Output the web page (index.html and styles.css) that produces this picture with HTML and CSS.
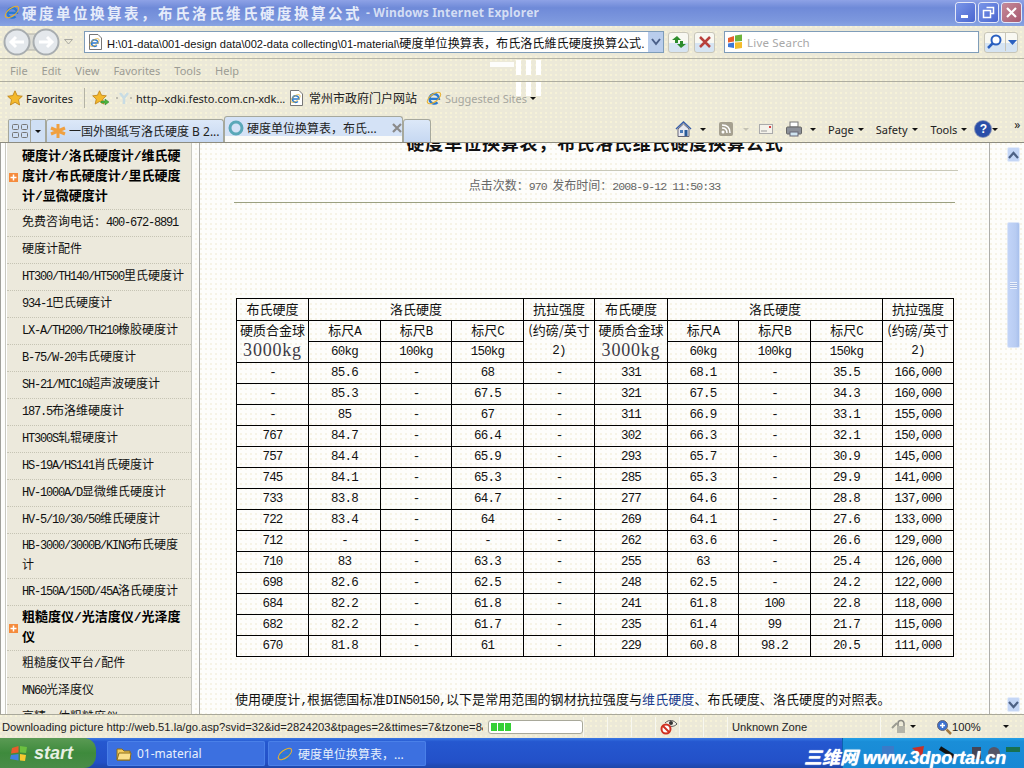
FILE: index.html
```html
<!DOCTYPE html>
<html lang="zh">
<head>
<meta charset="utf-8">
<title>硬度单位换算表</title>
<link rel="stylesheet" href="styles.css">
</head>
<body>
<svg class="defs" width="0" height="0">
  <symbol id="ie" viewBox="0 0 16 16">
    <path d="M4.500 8.800H13A4.800 4.800 0 1 0 11.500 12.300" fill="none" stroke="#2a7ad0" stroke-width="2.300"/>
    <ellipse cx="8" cy="8" rx="8" ry="3.800" transform="rotate(-38 8 8)" fill="none" stroke="#e8b030" stroke-width="1"/>
  </symbol>
  <symbol id="doc" viewBox="0 0 16 16">
    <path d="M2.500 .5H11L14.500 4V15.500H2.500Z" fill="#fff" stroke="#777"/>
    <use href="#ie" x="2" y="3" width="11" height="11"/>
  </symbol>
  <symbol id="star" viewBox="0 0 16 16">
    <path d="M8 .8 10.200 5.600 15.300 6.200 11.500 9.700 12.600 15 8 12.300 3.400 15 4.500 9.700 .7 6.200 5.800 5.600Z" fill="#f4b92c" stroke="#bb7d10" stroke-width=".8"/>
  </symbol>
  <symbol id="plus" viewBox="0 0 9 9">
    <rect width="9" height="9" fill="#f58b3c"/><path d="M4.500 1.500V7.500M1.500 4.500H7.500" stroke="#fff" stroke-width="1.500"/>
  </symbol>
</svg>

<div class="screen">
  <header class="titlebar">
    <svg class="i16"><use href="#ie"/></svg>
    <span class="title-cn">硬度单位换算表，布氏洛氏维氏硬度换算公式</span>
    <span class="title-en">- Windows Internet Explorer</span>
    <span class="winbtns">
      <span class="winbtn"><svg width="19" height="19"><rect x="5" y="12" width="7" height="3" fill="#fff"/></svg></span>
      <span class="winbtn"><svg width="19" height="19"><path d="M7.500 4.500H14.500V10.500H12M4.500 7.500H11.500V14.500H4.500Z" fill="none" stroke="#fff" stroke-width="1.500"/></svg></span>
      <span class="winbtn close"><svg width="19" height="19"><path d="M5 5 14 14M14 5 5 14" stroke="#fff" stroke-width="2.200"/></svg></span>
    </span>
  </header>

  <div class="addressrow">
    <span class="navpill">
      <svg width="57" height="28" viewBox="0 0 57 28">
        <rect x="8" y="6" width="42" height="16" fill="#dcdcd4" stroke="#b4b4aa"/>
        <circle cx="14" cy="14" r="12.500" fill="#e4e8ec" stroke="#a8adb0" stroke-width="2"/>
        <circle cx="43" cy="14" r="12.500" fill="#e4e8ec" stroke="#a8adb0" stroke-width="2"/>
        <path d="M21 14H9M13 9 8 14 13 19M36 14H48M44 9 49 14 44 19" fill="none" stroke="#fff" stroke-width="3"/>
      </svg>
    </span>
    <svg class="droptri" width="9" height="6"><path d="M.5.500H8.500L4.500 5Z" fill="none" stroke="#a8a8a0"/></svg>
    <div class="addrbox">
      <svg class="i16"><use href="#doc"/></svg>
      <span class="addrtext"><i class="al">H:\01-data\001-design data\002-data collecting\01-material\</i>硬度单位换算表，布氏洛氏維氏硬度换算公式.</span>
      <span class="addrdrop"><svg width="10" height="8"><path d="M1 1 5 6 9 1" fill="none" stroke="#4a5f88" stroke-width="2"/></svg></span>
    </div>
    <span class="toolbtn"><svg width="18" height="16"><path d="M7 2 2 6H5V9H8V6H11ZM11 14 16 10H13V7H10V10H7Z" fill="#2c8c2c"/></svg></span>
    <span class="toolbtn"><svg width="14" height="14"><path d="M2 2 12 12M12 2 2 12" stroke="#b8403c" stroke-width="2.500"/></svg></span>
    <div class="searchbox">
      <svg width="16" height="16" viewBox="0 0 16 16"><path d="M1 4 7 2V7.500L1 8.500Z" fill="#e8602c"/><path d="M8 1.500 15 .5V7L8 7.500Z" fill="#6eb43c"/><path d="M1 9.500 7 8.500V14L1 13Z" fill="#3c78d8"/><path d="M8 8.500 15 8V14L8 15Z" fill="#f4bc2c"/></svg>
      <span class="searchtext">Live Search</span>
    </div>
    <span class="searchbtn">
      <svg width="20" height="18"><circle cx="11" cy="7" r="4.500" fill="#fff" stroke="#2a60c0" stroke-width="2"/><path d="M8 10 3 15" stroke="#2a60c0" stroke-width="2.500"/></svg>
      <svg class="searchdrop" width="13" height="18"><path d="M2 7H11L6.500 12Z" fill="#2a60c0"/></svg>
    </span>
  </div>

  <nav class="menubar">
    <span>File</span><span>Edit</span><span>View</span><span>Favorites</span><span>Tools</span><span>Help</span>
  </nav>

  <div class="favbar">
    <svg class="i16"><use href="#star"/></svg>
    <span class="favlabel">Favorites</span>
    <span class="favsep"></span>
    <svg class="favadd" width="18" height="18" viewBox="0 0 18 18"><use href="#star" width="15" height="15" y="1"/><path d="M9 12H13V10L17 13 13 16V14H9Z" fill="#4cb43c" stroke="#2c8030" stroke-width=".5"/></svg>
    <svg class="favy" width="16" height="12" viewBox="0 0 16 12"><path d="M4 1 8 6 12 1M8 6V12" fill="none" stroke="#c8dce4" stroke-width="2.500"/><path d="M0 6H2M14 6H16" stroke="#888"/></svg>
    <span class="favlink w1">http--xdki.festo.com.cn-xdk...</span>
    <svg class="i16"><use href="#doc"/></svg>
    <span class="favlink w2">常州市政府门户网站</span>
    <svg class="i16"><use href="#ie"/></svg>
    <span class="favlink w3">Suggested Sites</span>
    <span class="caret"></span>
  </div>

  <div class="tabbar">
    <span class="quick">
      <svg width="16" height="14"><g fill="none" stroke="#777"><rect x=".5" y=".5" width="6" height="5" rx="1"/><rect x="9.500" y=".5" width="6" height="5" rx="1"/><rect x=".5" y="8.500" width="6" height="5" rx="1"/><rect x="9.500" y="8.500" width="6" height="5" rx="1"/></g></svg>
    </span>
    <span class="quick small"><span class="caret"></span></span>
    <span class="tab">
      <svg width="16" height="16" viewBox="0 0 16 16"><path d="M8 1V15M1 5 15 11M1 11 15 5" stroke="#f0a040" stroke-width="3"/></svg>
      <span class="tabtext">一国外图纸写洛氏硬度 B 2...</span>
    </span>
    <span class="tab active">
      <svg width="16" height="16"><circle cx="8" cy="8" r="6" fill="none" stroke="#5aa8b8" stroke-width="3"/></svg>
      <span class="tabtext">硬度单位换算表，布氏...</span>
      <svg class="tabx" width="10" height="10"><path d="M1 1 9 9M9 1 1 9" stroke="#8a8a8a" stroke-width="2.200"/></svg>
    </span>
    <span class="tab blank"></span>
    <div class="cmdbar">
      <svg class="cmd-home" width="17" height="16" viewBox="0 0 17 16"><path d="M1 8 8.500 1 16 8" fill="none" stroke="#3a5ea8" stroke-width="1.500"/><path d="M3 8V15.500H14V8L8.500 3Z" fill="#e8e8f0" stroke="#667"/><rect x="5" y="9" width="3" height="3" fill="#4a7ab8"/><rect x="9.500" y="9" width="3" height="6" fill="#2a5a98"/></svg>
      <span class="caret c1"></span>
      <svg class="cmd-rss" width="14" height="14"><rect width="14" height="14" rx="2" fill="#a5a090"/><circle cx="4" cy="10" r="1.500" fill="#fff"/><path d="M3 6C6 6 8 8 8 11M3 3C8 3 11 6 11 11" fill="none" stroke="#fff" stroke-width="1.500"/></svg>
      <span class="caret c2 faint"></span>
      <svg class="cmd-mail" width="14" height="10"><rect x=".5" y=".5" width="13" height="9" fill="#f4f2ea" stroke="#aaa"/><rect x="10" y="2" width="2" height="2" fill="#d84040"/><path d="M2 7H8" stroke="#999"/></svg>
      <svg class="cmd-print" width="16" height="16" viewBox="0 0 16 16"><rect x="4" y="1" width="8" height="5" fill="#fff" stroke="#777"/><rect x=".5" y="6" width="15" height="7" rx="1" fill="#8c9098" stroke="#666"/><rect x="4" y="11" width="8" height="4" fill="#cfe4f0" stroke="#667"/></svg>
      <span class="caret c3"></span>
      <span class="cmdtext t1">Page<span class="caret"></span></span>
      <span class="cmdtext t2">Safety<span class="caret"></span></span>
      <span class="cmdtext t3">Tools<span class="caret"></span></span>
      <span class="helpicon">?</span><span class="caret c4"></span>
      <span class="more">»</span>
    </div>
  </div>

  <main class="viewport">
    <aside class="side">
      <ul class="sidelist">
        <li class="b"><svg class="plus"><use href="#plus"/></svg><span>硬度计/洛氏硬度计/维氏硬度计/布氏硬度计/里氏硬度计/显微硬度计</span></li>
        <li><span>免费咨询电话：<i class="l">400-672-8891</i></span></li>
        <li><span>硬度计配件</span></li>
        <li><span><i class="l">HT300/TH140/HT500</i>里氏硬度计</span></li>
        <li><span><i class="l">934-1</i>巴氏硬度计</span></li>
        <li><span><i class="l">LX-A/TH200/TH210</i>橡胶硬度计</span></li>
        <li><span><i class="l">B-75/W-20</i>韦氏硬度计</span></li>
        <li><span><i class="l">SH-21/MIC10</i>超声波硬度计</span></li>
        <li><span><i class="l">187.5</i>布洛维硬度计</span></li>
        <li><span><i class="l">HT300S</i>轧辊硬度计</span></li>
        <li><span><i class="l">HS-19A/HS141</i>肖氏硬度计</span></li>
        <li><span><i class="l">HV-1000A/D</i>显微维氏硬度计</span></li>
        <li><span><i class="l">HV-5/10/30/50</i>维氏硬度计</span></li>
        <li><span><i class="l">HB-3000/3000B/KING</i>布氏硬度计</span></li>
        <li><span><i class="l">HR-150A/150D/45A</i>洛氏硬度计</span></li>
        <li class="b"><svg class="plus"><use href="#plus"/></svg><span>粗糙度仪/光洁度仪/光泽度仪</span></li>
        <li><span>粗糙度仪平台/配件</span></li>
        <li><span><i class="l">MN60</i>光泽度仪</span></li>
        <li><span>高精一体粗糙度仪</span></li>
      </ul>
    </aside>

    <article class="article">
      <h1 class="headline">硬度单位换算表，布氏洛氏维氏硬度换算公式</h1>
      <div class="meta">点击次数：<i class="l">970</i>&nbsp;&nbsp;发布时间：<i class="l">2008-9-12 11:50:33</i></div>
      <table class="grid">
        <colgroup><col class="c1"><col class="c2"><col class="c3"><col class="c4"><col class="c5"><col class="c6"><col class="c7"><col class="c8"><col class="c9"><col class="c10"></colgroup>
        <tr class="cn top"><td>布氏硬度</td><td colspan="3">洛氏硬度</td><td>抗拉强度</td><td>布氏硬度</td><td colspan="3">洛氏硬度</td><td>抗拉强度</td></tr>
        <tr class="cn"><td rowspan="2" class="hard">硬质合金球<span class="big">3000kg</span></td><td>标尺<i class="l">A</i></td><td>标尺<i class="l">B</i></td><td>标尺<i class="l">C</i></td><td rowspan="2" class="ten">(约磅/英寸<i class="l two">2)</i></td><td rowspan="2" class="hard">硬质合金球<span class="big">3000kg</span></td><td>标尺<i class="l">A</i></td><td>标尺<i class="l">B</i></td><td>标尺<i class="l">C</i></td><td rowspan="2" class="ten">(约磅/英寸<i class="l two">2)</i></td></tr>
        <tr><td>60kg</td><td>100kg</td><td>150kg</td><td>60kg</td><td>100kg</td><td>150kg</td></tr>
        <tr><td>-</td><td>85.6</td><td>-</td><td>68</td><td>-</td><td>331</td><td>68.1</td><td>-</td><td>35.5</td><td>166,000</td></tr>
        <tr><td>-</td><td>85.3</td><td>-</td><td>67.5</td><td>-</td><td>321</td><td>67.5</td><td>-</td><td>34.3</td><td>160,000</td></tr>
        <tr><td>-</td><td>85</td><td>-</td><td>67</td><td>-</td><td>311</td><td>66.9</td><td>-</td><td>33.1</td><td>155,000</td></tr>
        <tr><td>767</td><td>84.7</td><td>-</td><td>66.4</td><td>-</td><td>302</td><td>66.3</td><td>-</td><td>32.1</td><td>150,000</td></tr>
        <tr><td>757</td><td>84.4</td><td>-</td><td>65.9</td><td>-</td><td>293</td><td>65.7</td><td>-</td><td>30.9</td><td>145,000</td></tr>
        <tr><td>745</td><td>84.1</td><td>-</td><td>65.3</td><td>-</td><td>285</td><td>65.3</td><td>-</td><td>29.9</td><td>141,000</td></tr>
        <tr><td>733</td><td>83.8</td><td>-</td><td>64.7</td><td>-</td><td>277</td><td>64.6</td><td>-</td><td>28.8</td><td>137,000</td></tr>
        <tr><td>722</td><td>83.4</td><td>-</td><td>64</td><td>-</td><td>269</td><td>64.1</td><td>-</td><td>27.6</td><td>133,000</td></tr>
        <tr><td>712</td><td>-</td><td>-</td><td>-</td><td>-</td><td>262</td><td>63.6</td><td>-</td><td>26.6</td><td>129,000</td></tr>
        <tr><td>710</td><td>83</td><td>-</td><td>63.3</td><td>-</td><td>255</td><td>63</td><td>-</td><td>25.4</td><td>126,000</td></tr>
        <tr><td>698</td><td>82.6</td><td>-</td><td>62.5</td><td>-</td><td>248</td><td>62.5</td><td>-</td><td>24.2</td><td>122,000</td></tr>
        <tr><td>684</td><td>82.2</td><td>-</td><td>61.8</td><td>-</td><td>241</td><td>61.8</td><td>100</td><td>22.8</td><td>118,000</td></tr>
        <tr><td>682</td><td>82.2</td><td>-</td><td>61.7</td><td>-</td><td>235</td><td>61.4</td><td>99</td><td>21.7</td><td>115,000</td></tr>
        <tr><td>670</td><td>81.8</td><td>-</td><td>61</td><td>-</td><td>229</td><td>60.8</td><td>98.2</td><td>20.5</td><td>111,000</td></tr>
      </table>
      <p class="note">使用硬度计<i class="l">,</i>根据德国标准<i class="l">DIN50150,</i>以下是常用范围的钢材抗拉强度与<a class="link">维氏硬度</a>、布氏硬度、洛氏硬度的对照表。</p>
    </article>

    <div class="scrollwrap">
      <div class="scrollbar">
        <span class="sbtn"><svg width="11" height="8"><path d="M1 7 5.500 2 10 7" fill="none" stroke="#4d6185" stroke-width="2.200"/></svg></span>
        <span class="thumb"><span class="grip"></span></span>
        <span class="sbtn down"><svg width="11" height="8"><path d="M1 1 5.500 6 10 1" fill="none" stroke="#4d6185" stroke-width="2.200"/></svg></span>
      </div>
    </div>
  </main>

  <footer class="status">
    <span class="stext">Downloading picture http://web.51.la/go.asp?svid=32&amp;id=2824203&amp;tpages=2&amp;ttimes=7&amp;tzone=8&amp;</span>
    <span class="progress"><b></b><b></b><b></b></span>
    <span class="scell w24"></span><span class="scell w24"></span><span class="scell w24"></span>
    <span class="scell eye"><svg width="18" height="16"><path d="M5 4C9 0 14 1 17 5 14 8 10 8 8 6" fill="#f0eee4" stroke="#555"/><circle cx="11" cy="4" r="2" fill="#333"/><circle cx="6" cy="10" r="4.500" fill="#fff" stroke="#d03020" stroke-width="2"/><path d="M3 7 9 13" stroke="#d03020" stroke-width="2"/></svg></span>
    <span class="scell w24"></span><span class="scell w24"></span>
    <span class="scell zone">Unknown Zone</span>
    <span class="scell lock"><svg width="16" height="15"><path d="M2 9 7 4" stroke="#9a9a90" stroke-width="2"/><path d="M8 7V4.500A3 3 0 0 1 14 4.500V7" fill="none" stroke="#8a8a82" stroke-width="1.500"/><rect x="7" y="7" width="8" height="7" fill="#b4b4a8"/></svg><span class="caret"></span></span>
    <span class="zoombox"><svg width="16" height="16"><circle cx="6.500" cy="6.500" r="5" fill="#3a70d0" stroke="#667"/><path d="M4 6.500H9M6.500 4V9" stroke="#fff" stroke-width="1.500"/><path d="M10.500 10.500 15 15" stroke="#a07840" stroke-width="2.500"/></svg><span>100%</span><span class="caret"></span></span>
  </footer>

  <div class="taskbar">
    <span class="start">
      <svg width="19" height="19" viewBox="0 0 19 19"><path d="M2 4 8.500 2V8.500L1 9.500Z" fill="#e85c2c"/><path d="M10 2 17 3 16 9 10 8.500Z" fill="#6cc040"/><path d="M1 11 8.500 10V16.500L0 15Z" fill="#4080e0"/><path d="M10 10 16 11 15 17 10 16.500Z" fill="#f8c830"/></svg>
      <span>start</span>
    </span>
    <span class="task first">
      <svg width="16" height="14"><path d="M1 13V2H6L8 4H14V13Z" fill="#f4cc5c" stroke="#8c6c18"/><path d="M1 13 3 6H15L14 13Z" fill="#fbe08c" stroke="#8c6c18"/></svg>
      <span>01-material</span>
    </span>
    <span class="task">
      <svg class="i16"><use href="#ie"/></svg>
      <span>硬度单位换算表，...</span>
    </span>
    <div class="tray">
      <svg width="150" height="16"><rect x="10" y="1" width="12" height="13" fill="#3a7ac8"/><path d="M40 3 52 1 50 12Z" fill="#c83028"/><path d="M68 3 84 13" stroke="#111" stroke-width="4"/><rect x="100" y="2" width="9" height="12" fill="#445"/><circle cx="122" cy="8" r="6" fill="#556"/><rect x="134" y="2" width="14" height="5" fill="#187050"/></svg>
    </div>
  </div>

  <span class="glitch g1"></span><span class="glitch g2"></span><span class="glitch g3"></span>
  <span class="watermark">三维网 www.3dportal.cn</span>
</div>
</body>
</html>
```

FILE: styles.css
```css
html, body { margin: 0; padding: 0; }
body { width: 1024px; height: 768px; overflow: hidden; background: #ece9d8; font-family: "Liberation Sans", "Noto Sans CJK SC", sans-serif; }
.defs { position: absolute; }
svg { display: block; flex: none; }
i { font-style: normal; }
.i16 { width: 16px; height: 16px; }
.screen { position: relative; width: 1024px; height: 768px; display: flex; flex-direction: column; overflow: hidden; }
.addressrow, .menubar, .favbar, .tabbar, .status {
  background-color: #ece9d8;
  background-image: radial-gradient(circle at 1px 1px, #f6f2d8 .8px, transparent 1px);
  background-size: 5px 5px;
}

/* title bar */
.titlebar { height: 26px; flex: none; box-sizing: border-box; display: flex; align-items: center; padding: 0 3px 2px 4px; background: linear-gradient(#8ea2e6, #6f8ad8 30%, #7d98de 80%, #88a4e2); }
.title-cn { margin-left: 2px; width: 344px; font: 700 14.500px "Noto Sans CJK SC", sans-serif; letter-spacing: 2.500px; color: #e6ecfa; white-space: nowrap; }
.title-en { font: 700 12px "Noto Sans", sans-serif; letter-spacing: .2px; color: #d4def4; white-space: nowrap; }
.winbtns { margin-left: auto; display: flex; gap: 4px; }
.winbtn { width: 19px; height: 19px; border-radius: 3px; background: linear-gradient(135deg, #7a96e8, #4a66d0); box-shadow: 0 0 0 1px #e4e8f8; }
.winbtn.close { background: linear-gradient(135deg, #c58a9a, #a85a70); }

/* address */
.addressrow { height: 33px; flex: none; box-sizing: border-box; display: flex; align-items: center; padding: 0 0 0 3px; border-bottom: 1px solid #b5b4a6; }
.navpill { width: 57px; height: 28px; }
.droptri { margin-left: 4px; }
.addrbox { margin-left: 11px; width: 580px; height: 22px; box-sizing: border-box; border: 1px solid #7f9db9; background: #fff; display: flex; align-items: center; padding-left: 2px; position: relative; }
.addrtext { margin-left: 4px; width: 541px; overflow: hidden; white-space: nowrap; font: 12.100px "Liberation Sans", "Noto Sans CJK SC", sans-serif; color: #111; }
.al { font-size: 11.100px; }
.addrdrop { margin-left: auto; width: 15px; height: 20px; background: #b9cdec; display: flex; align-items: center; justify-content: center; }
.toolbtn { margin-left: 4px; width: 21px; height: 21px; box-sizing: border-box; border: 1px solid #c8c6b8; border-radius: 3px; background: linear-gradient(#f8f8f2 50%, #d6e4f2 50%); display: flex; align-items: center; justify-content: center; }
.toolbtn + .toolbtn { margin-left: 5px; }
.searchbox { margin-left: 9px; width: 255px; height: 22px; box-sizing: border-box; border: 1px solid #7f9db9; background: #fff; display: flex; align-items: center; padding-left: 2px; gap: 4px; }
.searchtext { font: 11.500px "Noto Sans", sans-serif; color: #a8a8a8; letter-spacing: .2px; }
.searchbtn { margin-left: 5px; width: 34px; height: 21px; box-sizing: border-box; border: 1px solid #c8c6b8; border-radius: 3px; background: linear-gradient(#f8f8f2 50%, #d6e4f2 50%); display: flex; align-items: center; }
.searchdrop { border-left: 1px solid #c8c6b8; }

/* menu */
.menubar { height: 23px; flex: none; box-sizing: border-box; display: flex; align-items: center; gap: 14px; padding-left: 10px; border-bottom: 1px solid #aeada0; font: 11px "Noto Sans", sans-serif; color: #9c9c94; }

/* favorites */
.favbar { height: 34px; flex: none; display: flex; align-items: center; padding: 0 0 2px 7px; box-sizing: border-box; font: 11px "Noto Sans", "Noto Sans CJK SC", sans-serif; color: #222; }
.favlabel { margin-left: 3px; width: 58px; }
.favsep { width: 1px; height: 20px; background: #b4b3a4; }
.favadd { margin-left: 7px; }
.favy { margin-left: 6px; }
.favlink { margin-left: 4px; white-space: nowrap; overflow: hidden; }
.w1 { width: 152px; }
.w2 { margin-left: 5px; width: 117px; font-size: 12px; }
.w3 { margin-left: 3px; width: 85px; color: #a6a69e; }
.caret { display: inline-block; flex: none; width: 0; height: 0; border: 3px solid transparent; border-top: 3px solid #111; border-bottom: 0; }

/* tabs */
.tabbar { height: 27px; flex: none; box-sizing: border-box; display: flex; align-items: flex-end; padding-left: 8px; border-bottom: 1px solid #8d8c80; position: relative; font: 12px "Noto Sans", "Noto Sans CJK SC", sans-serif; color: #222; }
.quick { width: 23px; height: 23px; box-sizing: border-box; border: 1px solid #a6a89c; border-bottom-width: 0; border-radius: 2px 0 0 0; background: #cfdff4; display: flex; align-items: center; justify-content: center; }
.quick.small { width: 15px; border-left-width: 0; }
.tab { width: 178px; height: 23px; box-sizing: border-box; border: 1px solid #a6a89c; border-bottom: 0; border-radius: 3px 3px 0 0; background: linear-gradient(#dce8f8, #c6d8f2); display: flex; align-items: center; padding: 0 0 0 3px; gap: 3px; overflow: hidden; white-space: nowrap; }
.tab.active { height: 26px; width: 179px; background: linear-gradient(#d4e2f6 75%, #fbfbf8 75%); padding-bottom: 3px; }
.tab.blank { width: 28px; }
.tabx { margin-left: 10px; }
.tabtext { overflow: hidden; }
.active .tabtext { width: 135px; }
.cmdbar { position: relative; margin-left: auto; flex: 1; height: 26px; align-self: flex-end; display: flex; align-items: center; font: 11px "Noto Sans", sans-serif; }
.cmd-home { margin-left: 244px; }
.c1 { margin-left: 8px; }
.cmd-rss { margin-left: 13px; }
.c2 { margin-left: 10px; }
.faint { border-top-color: #c4c2b4; }
.cmd-mail { margin-left: 10px; }
.cmd-print { margin-left: 13px; }
.c3 { margin-left: 8px; }
.cmdtext { white-space: nowrap; display: inline-flex; align-items: center; gap: 4px; }
.t1 { margin-left: 12px; }
.t2 { margin-left: 12px; }
.t3 { margin-left: 13px; }
.helpicon { margin-left: 8px; width: 16px; height: 16px; border-radius: 50%; background: #2a4ea8; color: #fff; font: 700 12px/16px "Liberation Sans", sans-serif; text-align: center; box-shadow: 0 0 0 1px #8894b8; }
.c4 { margin-left: 1px; }
.more { margin-left: 16px; margin-top: -8px; font-size: 12px; line-height: 12px; }

/* viewport */
.viewport { flex: 1; min-height: 0; display: flex; overflow: hidden; background: #fdfdfb; background-image: radial-gradient(circle at 1px 1px, #f6f3e6 .8px, transparent 1px); background-size: 5px 5px; border-bottom: 1px solid #a9a89a; }
.side { width: 200px; flex: none; box-sizing: border-box; padding-left: 1px; border-right: 1px solid #aeaeaa; }
.sidelist { list-style: none; margin: 0; padding: 2px 0 0; width: 184px; margin-left: 5px; background: #ece9dc; border-left: 1px solid #fff; outline: 1px solid #c8c8c0; min-height: 580px; box-shadow: -5px 0 0 #fdfdfb, -6px 0 0 #a0a09a; }
.sidelist li { position: relative; box-sizing: border-box; min-height: 27px; display: flex; align-items: center; padding: 2px 2px 2px 15px; border-bottom: 1px dotted #c6c4b4; font: 12px/20px "Liberation Mono", "Noto Sans CJK SC", monospace; color: #111; }
.sidelist li > span { display: block; width: 166px; }
.sidelist .b { font-size: 13px; font-weight: 700; color: #000; }
.sidelist .b > span { width: 160px; }
.plus { position: absolute; left: 2px; top: 50%; margin-top: -4px; width: 9px; height: 9px; }
.l { font: 12.500px/20px "Liberation Mono", monospace; letter-spacing: -.8px; }
.sidelist .l { font-size: 12px; letter-spacing: -1.200px; }
.meta .l { font-size: 11.500px; letter-spacing: -.9px; line-height: 27px; }
.article { width: 790px; flex: none; box-sizing: border-box; padding: 0 0 0 32px; border-right: 1px solid #aeaeaa; }
.headline { margin: -13px 0 0; height: 40px; border-bottom: 1px solid #c8c8b8; width: 726px; font: 700 18px/25px "Noto Sans CJK SC", sans-serif; letter-spacing: .85px; text-align: center; color: #111; white-space: nowrap; overflow: hidden; }
.meta { margin: 0 0 0 2px; width: 721px; height: 32px; border-bottom: 1px solid #9a9f80; box-sizing: border-box; text-align: center; font: 12px/27px "Noto Sans CJK SC", sans-serif; color: #666; }
.grid { margin: 95px 0 0 4px; border-collapse: collapse; table-layout: fixed; width: 717px; font: 12.500px "Liberation Mono", monospace; letter-spacing: -.8px; color: #111; background: transparent; }
.grid td { border: 1px solid #000; padding: 1px 0 0; height: 19px; text-align: center; line-height: 19px; overflow: hidden; white-space: nowrap; }
.grid .cn td { padding: 0 0 2px; height: 18px; font: 13px/18px "Noto Sans CJK SC", sans-serif; letter-spacing: 0; }
.grid .top td { height: 19px; }
.grid .cn .l { line-height: 0; }
.grid .hard, .grid .ten { vertical-align: top; }
.big { display: block; height: 20px; font: 18px/23px "Liberation Serif", serif; letter-spacing: .8px; color: #3c3a46; }
.grid .cn .two { display: block; height: 20px; line-height: 24px; }
col.c1 { width: 72px; } col.c2 { width: 72px; } col.c3 { width: 71px; } col.c4 { width: 72px; } col.c5 { width: 71px; }
col.c6 { width: 73px; } col.c7 { width: 71px; } col.c8 { width: 72px; } col.c9 { width: 72px; } col.c10 { width: 71px; }
.note { margin: 32px 0 0 3px; font: 13px/20px "Noto Sans CJK SC", sans-serif; letter-spacing: .08px; color: #111; white-space: nowrap; }
.link { color: #173a8c; }
.scrollwrap { flex: 1; display: flex; justify-content: flex-end; padding: 4px 4px 2px 0; }
.scrollbar { width: 13px; display: flex; flex-direction: column; }
.sbtn { height: 15px; flex: none; box-sizing: border-box; background: #c4d6f6; border: 1px solid #e4ecfa; border-radius: 2px; display: flex; align-items: center; justify-content: center; }
.sbtn.down { margin-top: auto; }
.thumb { margin-top: 60px; height: 126px; flex: none; box-sizing: border-box; background: linear-gradient(90deg, #c2d4f8, #b8ccf2 70%, #a8c0ec); border: 1px solid #dce6f8; border-radius: 2px; display: flex; align-items: center; justify-content: center; }
.grip { width: 7px; height: 7px; background: repeating-linear-gradient(#eef3fc 0 1px, #a8bce4 1px 2px); }

/* status */
.status { height: 23px; flex: none; box-sizing: border-box; display: flex; align-items: center; font: 11.200px "Liberation Sans", sans-serif; color: #222; }
.stext { margin-left: 2px; width: 481px; overflow: hidden; white-space: nowrap; }
.progress { margin-left: 5px; width: 95px; height: 14px; box-sizing: border-box; border: 1px solid #a8a89a; border-radius: 3px; background: #fff; display: flex; gap: 1px; padding: 2px; }
.progress b { width: 6px; background: #35d035; }
.scell { height: 20px; box-sizing: border-box; border-left: 1px solid #f8f8f0; display: flex; align-items: center; }
.w24 { width: 24px; }
.eye { width: 24px; padding-left: 4px; }
.zone { width: 153px; padding-left: 4px; }
.lock { width: 44px; padding-left: 9px; gap: 4px; }
.zoombox { display: flex; align-items: center; margin-left: 12px; width: 70px; }
.zoombox .caret { margin-left: 22px; }

/* taskbar */
.taskbar { height: 30px; flex: none; display: flex; align-items: stretch; background: linear-gradient(#3a78e4, #2558d0 12%, #2350c8 80%, #1e46a8); font: 12px "Noto Sans", "Noto Sans CJK SC", sans-serif; color: #e8f0fc; }
.start { width: 96px; display: flex; align-items: center; gap: 5px; box-sizing: border-box; padding-left: 10px; border-radius: 0 12px 12px 0; background: linear-gradient(#5a9a54, #3e8a3c 50%, #4a8c48); font: italic 700 18px "Liberation Sans", sans-serif; color: #e8f0e4; }
.task { margin: 3px 0 2px 3px; width: 158px; box-sizing: border-box; display: flex; align-items: center; gap: 5px; padding-left: 9px; background: #3c70e0; border-radius: 2px; box-shadow: inset 0 0 0 1px #4a80e8; white-space: nowrap; }
.task.first { margin-left: 11px; }
.tray { margin-left: auto; width: 182px; background: linear-gradient(#24a0e8, #1a8ed8 12%, #1788d4); box-shadow: inset 1px 0 0 #0c60b0; display: flex; align-items: center; padding-left: 30px; box-sizing: border-box; }

/* overlays */
.glitch { position: absolute; background: #fdfdfb; }
.g1 { left: 490px; top: 62px; width: 24px; height: 5px; }
.g2 { left: 516px; top: 60px; width: 30px; height: 15px; background: repeating-linear-gradient(90deg, #fff 0 5px, transparent 5px 10px); }
.g3 { left: 516px; top: 82px; width: 30px; height: 14px; background: repeating-linear-gradient(90deg, #fff 0 5px, transparent 5px 10px); }
.watermark { position: absolute; left: 804px; top: 743px; font: italic 700 18px "Liberation Sans", "Noto Sans CJK SC", sans-serif; color: #fff; white-space: nowrap; text-shadow: 0 0 1px #fff; }
```
